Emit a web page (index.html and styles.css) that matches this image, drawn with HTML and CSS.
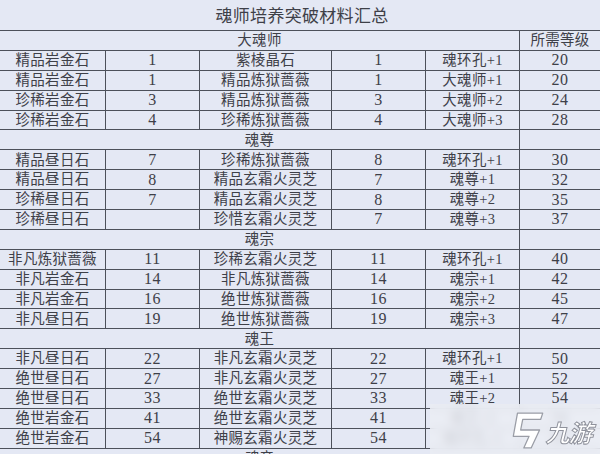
FILE: index.html
```html
<!DOCTYPE html>
<html lang="zh">
<head>
<meta charset="utf-8">
<title>魂师培养突破材料汇总</title>
<link rel="stylesheet" href="styles.css">
</head>
<body>
<div class="sheet">
  <div class="title">魂师培养突破材料汇总</div>
  <div class="grid">
    <div class="cell span5">大魂师</div><div class="cell">所需等级</div>
    <div class="cell">精品岩金石</div><div class="cell num">1</div><div class="cell">紫棱晶石</div><div class="cell num">1</div><div class="cell">魂环孔+1</div><div class="cell num">20</div>
    <div class="cell">精品岩金石</div><div class="cell num">1</div><div class="cell">精品炼狱蔷薇</div><div class="cell num">1</div><div class="cell">大魂师+1</div><div class="cell num">20</div>
    <div class="cell">珍稀岩金石</div><div class="cell num">3</div><div class="cell">精品炼狱蔷薇</div><div class="cell num">3</div><div class="cell">大魂师+2</div><div class="cell num">24</div>
    <div class="cell">珍稀岩金石</div><div class="cell num">4</div><div class="cell">珍稀炼狱蔷薇</div><div class="cell num">4</div><div class="cell">大魂师+3</div><div class="cell num">28</div>

    <div class="cell span5">魂尊</div><div class="cell"></div>
    <div class="cell">精品昼日石</div><div class="cell num">7</div><div class="cell">珍稀炼狱蔷薇</div><div class="cell num">8</div><div class="cell">魂环孔+1</div><div class="cell num">30</div>
    <div class="cell">精品昼日石</div><div class="cell num">8</div><div class="cell">精品玄霜火灵芝</div><div class="cell num">7</div><div class="cell">魂尊+1</div><div class="cell num">32</div>
    <div class="cell">珍稀昼日石</div><div class="cell num">7</div><div class="cell">精品玄霜火灵芝</div><div class="cell num">8</div><div class="cell">魂尊+2</div><div class="cell num">35</div>
    <div class="cell">珍稀昼日石</div><div class="cell num"></div><div class="cell">珍惜玄霜火灵芝</div><div class="cell num">7</div><div class="cell">魂尊+3</div><div class="cell num">37</div>

    <div class="cell span5">魂宗</div><div class="cell"></div>
    <div class="cell">非凡炼狱蔷薇</div><div class="cell num">11</div><div class="cell">珍稀玄霜火灵芝</div><div class="cell num">11</div><div class="cell">魂环孔+1</div><div class="cell num">40</div>
    <div class="cell">非凡岩金石</div><div class="cell num">14</div><div class="cell">非凡炼狱蔷薇</div><div class="cell num">14</div><div class="cell">魂宗+1</div><div class="cell num">42</div>
    <div class="cell">非凡岩金石</div><div class="cell num">16</div><div class="cell">绝世炼狱蔷薇</div><div class="cell num">16</div><div class="cell">魂宗+2</div><div class="cell num">45</div>
    <div class="cell">非凡昼日石</div><div class="cell num">19</div><div class="cell">绝世炼狱蔷薇</div><div class="cell num">19</div><div class="cell">魂宗+3</div><div class="cell num">47</div>

    <div class="cell span5">魂王</div><div class="cell"></div>
    <div class="cell">非凡昼日石</div><div class="cell num">22</div><div class="cell">非凡玄霜火灵芝</div><div class="cell num">22</div><div class="cell">魂环孔+1</div><div class="cell num">50</div>
    <div class="cell">绝世昼日石</div><div class="cell num">27</div><div class="cell">非凡玄霜火灵芝</div><div class="cell num">27</div><div class="cell">魂王+1</div><div class="cell num">52</div>
    <div class="cell">绝世昼日石</div><div class="cell num">33</div><div class="cell">绝世玄霜火灵芝</div><div class="cell num">33</div><div class="cell">魂王+2</div><div class="cell num">54</div>
    <div class="cell">绝世岩金石</div><div class="cell num">41</div><div class="cell">绝世玄霜火灵芝</div><div class="cell num">41</div><div class="cell">魂王+3</div><div class="cell num">56</div>
    <div class="cell">绝世岩金石</div><div class="cell num">54</div><div class="cell">神赐玄霜火灵芝</div><div class="cell num">54</div><div class="cell">魂环孔+1</div><div class="cell num">60</div>
  </div>
  <div class="next-row">魂帝</div>
</div>
<div class="watermark">
  <svg class="wm-logo" width="36" height="40" viewBox="0 0 34 38" aria-hidden="true">
    <path d="M7 3 L31 3 L29 9 L12 9 L10 19 L28 19 L20 36 L13 36 L18 25 L3 25 Z" fill="#ffffff" stroke="#9a9da6" stroke-width="1.2" stroke-linejoin="round"/>
  </svg>
  <span class="wm-text">九游</span>
</div>
</body>
</html>
```
FILE: styles.css
```css
html, body {
  margin: 0;
  padding: 0;
  width: 600px;
  height: 454px;
  overflow: hidden;
  background: #e4e8f4;
}

.sheet {
  width: 600px;
  font-family: "Liberation Serif", "Noto Sans CJK SC", serif;
  color: #3e4048;
}

.title {
  height: 30px;
  line-height: 30px;
  text-align: center;
  font-family: "Noto Sans CJK SC", sans-serif;
  font-size: 17px;
  letter-spacing: 0.3px;
  color: #3e4048;
  padding-left: 4px;
  box-sizing: border-box;
}

.grid {
  display: grid;
  grid-template-columns: 105px 93px 131px 93px 93px 1fr;
  grid-auto-rows: 18.9px;
  gap: 1px;
  padding-top: 1px;
  padding-bottom: 1px;
  background: #4c505a;
}

.cell {
  background: #e4e8f4;
  display: flex;
  align-items: center;
  justify-content: center;
  font-size: 14.5px;
  letter-spacing: 0.3px;
  line-height: 1;
  white-space: nowrap;
  overflow: hidden;
}

.num {
  font-size: 16px;
  letter-spacing: 0.6px;
}

.span5 {
  grid-column: span 5;
}

.next-row {
  width: 519px;
  text-align: center;
  font-size: 14.5px;
  line-height: 1;
  padding-top: 2px;
}

.watermark {
  position: absolute;
  left: 430px;
  top: 404px;
  width: 170px;
  height: 50px;
  background: rgba(236, 238, 244, 0.82);
  backdrop-filter: blur(4px);
  display: flex;
  align-items: center;
  justify-content: flex-end;
  gap: 2px;
  padding-right: 6px;
  box-sizing: border-box;
}

.wm-logo {
  display: block;
  margin-top: 2px;
}

.wm-text {
  font-family: "Noto Sans CJK SC", sans-serif;
  font-size: 24px;
  font-weight: 700;
  color: #ffffff;
  transform: skewX(-14deg);
  -webkit-text-stroke: 1px #8f929c;
  letter-spacing: -1px;
  margin-top: 4px;
}
```
